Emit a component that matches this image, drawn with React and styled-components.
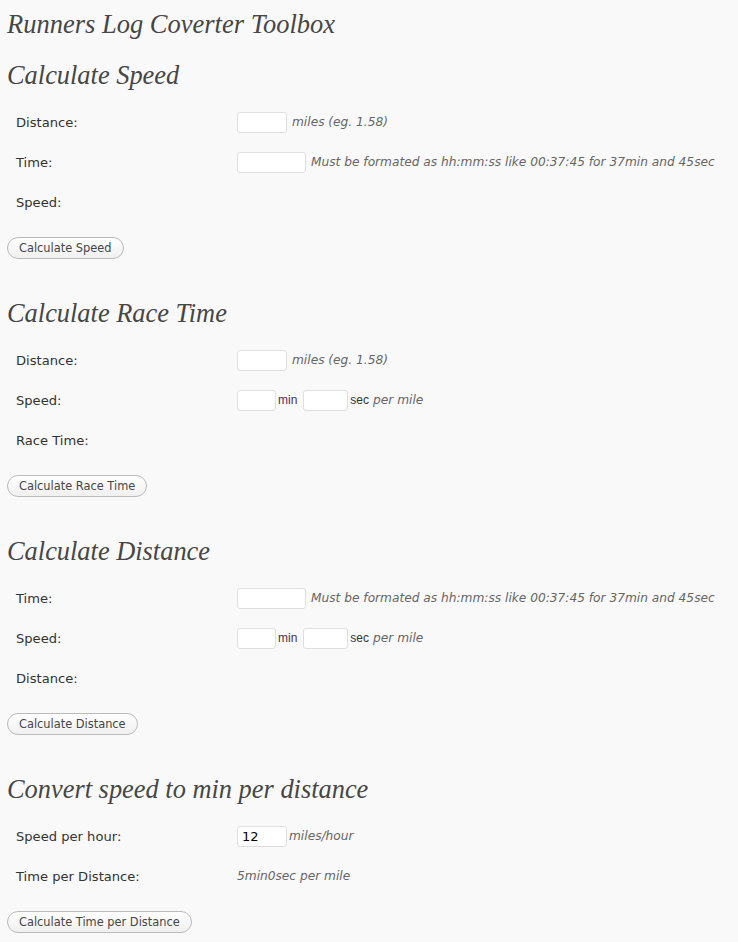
import React from "react";
import styled, { createGlobalStyle } from "styled-components";

const Global = createGlobalStyle`
  html, body { margin: 0; padding: 0; background: #f9f9f9; }
  body { font-family: "DejaVu Sans", Verdana, sans-serif; color: #333; }
`;

const Page = styled.div`
  padding: 3px 0 0 0;
  width: 738px;
`;

const Title = styled.h2`
  margin: 0 0 12px 0;
  padding-left: 7px;
  height: 40px;
  line-height: 42px;
  font-family: "Liberation Serif", Georgia, serif;
  font-style: italic;
  font-weight: normal;
  font-size: 26.5px;
  color: #464646;
`;

const Section = styled.section`
  margin-bottom: 34px;
`;

const SectionTitle = styled.h3`
  margin: 0 0 7px 0;
  padding-left: 7px;
  height: 40px;
  line-height: 40px;
  font-family: "Liberation Serif", Georgia, serif;
  font-style: italic;
  font-weight: normal;
  font-size: 26.4px;
  color: #464646;
`;

const Row = styled.div`
  display: grid;
  grid-template-columns: 237px 1fr;
  align-items: center;
  height: 40px;
`;

const Label = styled.div`
  padding-left: 16px;
  font-size: 13.1px;
  color: #333;
`;

const Field = styled.div`
  display: flex;
  align-items: center;
  white-space: nowrap;
`;

const Input = styled.input`
  box-sizing: border-box;
  width: ${(p) => p.$w}px;
  height: 21px;
  margin: 0;
  padding: 0 4px;
  border: 1px solid #dfdfdf;
  border-radius: 3px;
  background: #fff;
  font-family: "DejaVu Sans", Verdana, sans-serif;
  font-size: 13px;
  color: #000;
  outline: none;
`;

const Hint = styled.span`
  margin-left: ${(p) => (p.$ml !== undefined ? p.$ml : 5)}px;
  font-style: italic;
  font-size: 12.2px;
  color: #666;
`;

const Unit = styled.span`
  font-family: "Liberation Sans", Arial, sans-serif;
  font-size: 12px;
  color: ${(p) => p.$c || "#333"};
  margin: 0 ${(p) => p.$mr || 0}px 0 2px;
`;

const Button = styled.button`
  margin: 15px 0 0 7px;
  height: 22px;
  padding: 0 11px;
  border: 1px solid #bbb;
  border-radius: 11px;
  background: linear-gradient(#ffffff, #f0f0f0);
  font-family: "DejaVu Sans", Verdana, sans-serif;
  font-size: 11.4px;
  color: #464646;
  cursor: pointer;
`;

const TIME_HINT =
  "Must be formated as hh:mm:ss like 00:37:45 for 37min and 45sec";

function PaceField() {
  return (
    <Field>
      <Input $w={39} />
      <Unit $c="#4f2f52" $mr={6}>min</Unit>
      <Input $w={45} />
      <Unit>sec</Unit>
      <Hint $ml={4}>per mile</Hint>
    </Field>
  );
}

export default function App() {
  return (
    <Page>
      <Global />
      <Title>Runners Log Coverter Toolbox</Title>

      <Section>
        <SectionTitle>Calculate Speed</SectionTitle>
        <Row>
          <Label>Distance:</Label>
          <Field>
            <Input $w={50} />
            <Hint>miles (eg. 1.58)</Hint>
          </Field>
        </Row>
        <Row>
          <Label>Time:</Label>
          <Field>
            <Input $w={69} />
            <Hint>{TIME_HINT}</Hint>
          </Field>
        </Row>
        <Row>
          <Label>Speed:</Label>
          <Field />
        </Row>
        <Button>Calculate Speed</Button>
      </Section>

      <Section>
        <SectionTitle>Calculate Race Time</SectionTitle>
        <Row>
          <Label>Distance:</Label>
          <Field>
            <Input $w={50} />
            <Hint>miles (eg. 1.58)</Hint>
          </Field>
        </Row>
        <Row>
          <Label>Speed:</Label>
          <PaceField />
        </Row>
        <Row>
          <Label>Race Time:</Label>
          <Field />
        </Row>
        <Button>Calculate Race Time</Button>
      </Section>

      <Section>
        <SectionTitle>Calculate Distance</SectionTitle>
        <Row>
          <Label>Time:</Label>
          <Field>
            <Input $w={69} />
            <Hint>{TIME_HINT}</Hint>
          </Field>
        </Row>
        <Row>
          <Label>Speed:</Label>
          <PaceField />
        </Row>
        <Row>
          <Label>Distance:</Label>
          <Field />
        </Row>
        <Button>Calculate Distance</Button>
      </Section>

      <Section>
        <SectionTitle>Convert speed to min per distance</SectionTitle>
        <Row>
          <Label>Speed per hour:</Label>
          <Field>
            <Input $w={50} defaultValue="12" />
            <Hint $ml={2}>miles/hour</Hint>
          </Field>
        </Row>
        <Row>
          <Label>Time per Distance:</Label>
          <Field>
            <Hint $ml={0}>5min0sec per mile</Hint>
          </Field>
        </Row>
        <Button>Calculate Time per Distance</Button>
      </Section>
    </Page>
  );
}
